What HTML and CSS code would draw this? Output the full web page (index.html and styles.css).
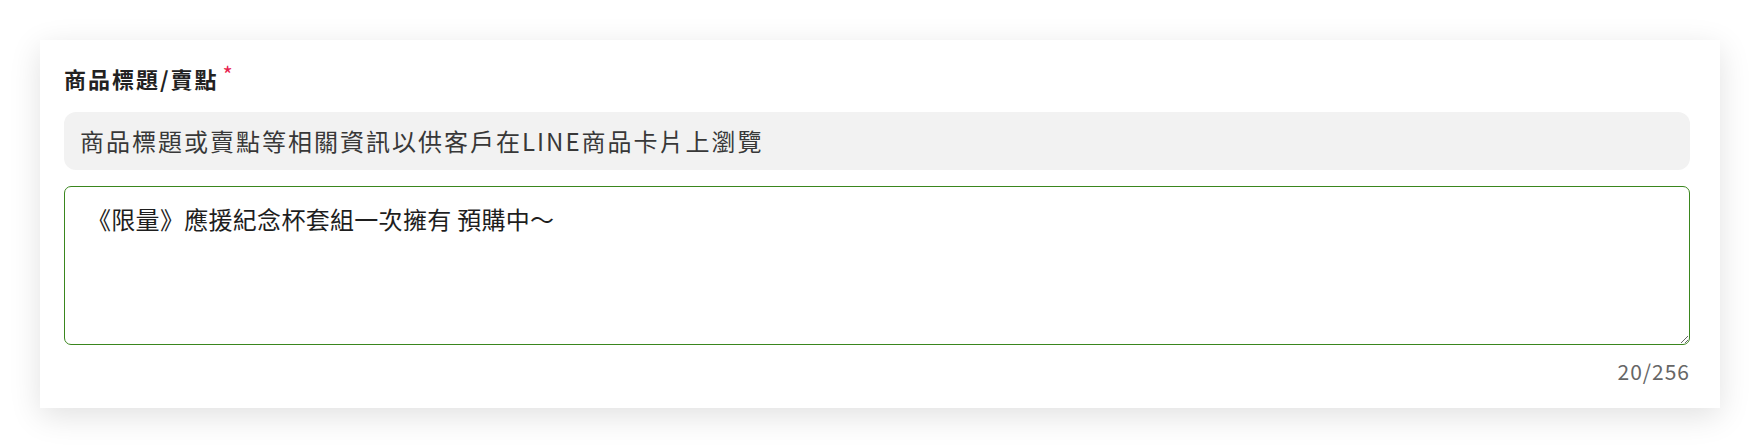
FILE: index.html
```html
<!DOCTYPE html>
<html>
<head>
    <meta charset="utf-8">
    <meta name="viewport" content="width=device-width, initial-scale=1">
    <title>商品標題/賣點</title>
    <link rel="stylesheet" href="styles.css">
</head>
<body>
    <div class="wrap">
        <div class="card">
            <!--label-->
            <div class="label">商品標題/賣點<span class="req">*</span></div>
            <div class="tip">商品標題或賣點等相關資訊以供客戶在LINE商品卡片上瀏覽</div>
            <textarea class="input">《限量》應援紀念杯套組一次擁有 預購中～</textarea>
            <div class="count">20/256</div>
        </div>
    </div>
</body>
</html>
```

FILE: styles.css
```css
*{
    margin: 0;
    padding: 0;
    box-sizing: border-box;
}
body{
    background: #fff;
    font-family: "Noto Sans CJK TC", "Noto Sans", sans-serif;
}
.wrap{
    padding: 40px;
}
.card{
    background: #fff;
    padding: 20px 30px 23px 24px;
    box-shadow: 0 8px 30px rgba(0,0,0,0.12);
    display: flex;
    flex-direction: column;
}
.label{
    font-size: 22px;
    line-height: 36px;
    font-weight: bold;
    letter-spacing: 2px;
    color: #222;
}
.req{
    color: #e8234f;
    font-size: 22px;
    font-weight: normal;
    vertical-align: 5px;
    line-height: 0;
    margin-left: 4px;
}
.tip{
    margin-top: 16px;
    height: 58px;
    line-height: 58px;
    padding-left: 16px;
    background: #f2f2f2;
    border-radius: 12px;
    font-size: 24px;
    letter-spacing: 2px;
    color: #383838;
}
.input{
    display: block;
    margin-top: 16px;
    width: 100%;
    height: 159px;
    padding: 14px 22px;
    border: 1px solid #3a861e;
    border-radius: 7px;
    font-family: "Noto Sans CJK TC", "Noto Sans", sans-serif;
    font-size: 24px;
    line-height: 36px;
    letter-spacing: 0.3px;
    color: #1e1e1e;
    outline: none;
    resize: vertical;
}
.count{
    margin-top: 12px;
    text-align: right;
    font-size: 21px;
    line-height: 28px;
    letter-spacing: 1px;
    color: #666;
}
```
